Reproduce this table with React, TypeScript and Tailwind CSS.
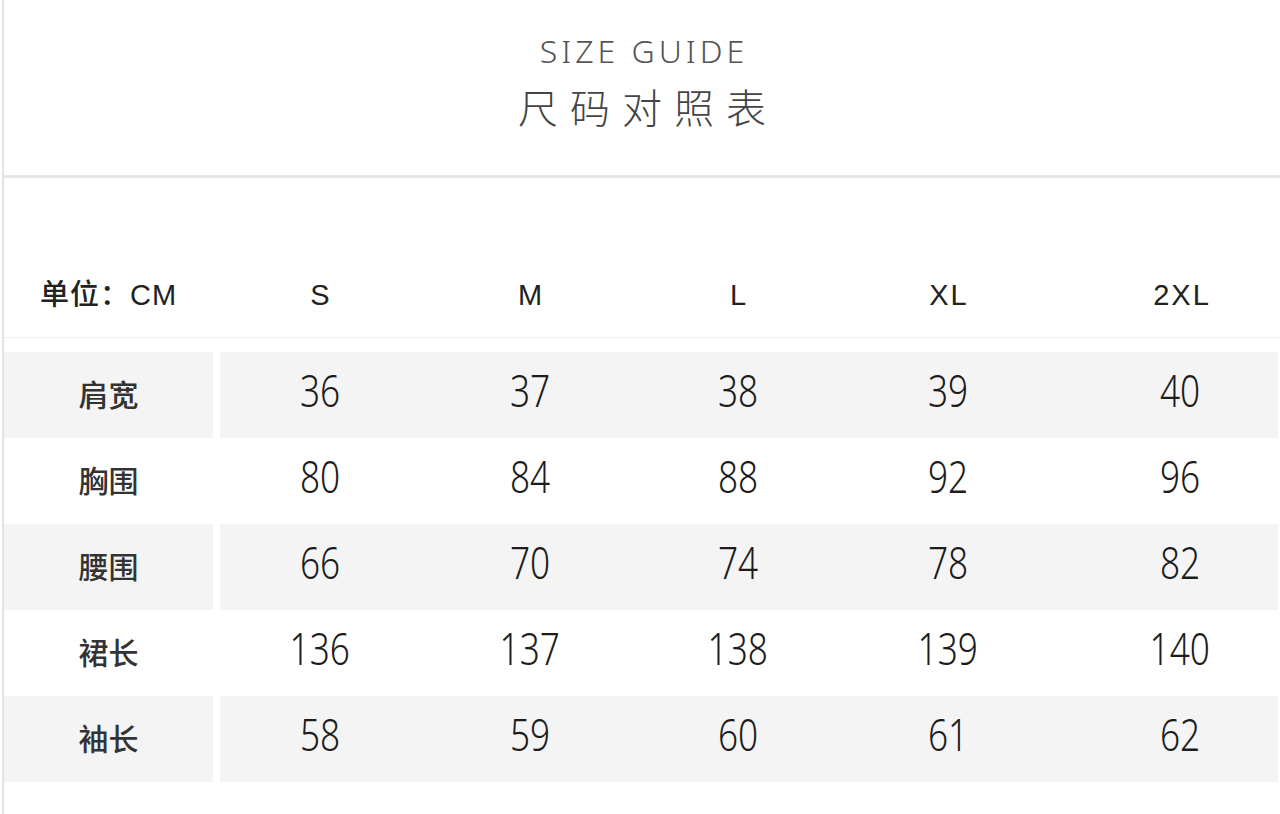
import React from "react";

const sizes = ["S", "M", "L", "XL", "2XL"];

const rows = [
  { label: "肩宽", values: ["36", "37", "38", "39", "40"] },
  { label: "胸围", values: ["80", "84", "88", "92", "96"] },
  { label: "腰围", values: ["66", "70", "74", "78", "82"] },
  { label: "裙长", values: ["136", "137", "138", "139", "140"] },
  { label: "袖长", values: ["58", "59", "60", "61", "62"] },
];

// column widths of the data area, starting at x=220
const colClass = [
  "w-[200px]",
  "w-[220px]",
  "w-[196px]",
  "w-[224px]",
  "flex-1 pl-[22px]",
];

const cjk = "font-['Noto_Sans_CJK_SC',sans-serif]";
const latin = "font-['Liberation_Sans','Noto_Sans_CJK_SC',sans-serif]";

function DataCells({ values, header }: { values: string[]; header?: boolean }) {
  return (
    <div className="flex flex-1 items-center h-full">
      {values.map((v, i) => (
        <div key={i} className={`${colClass[i]} flex justify-center items-center`}>
          {header ? (
            <span className={`${latin} text-[29px] tracking-[2px] text-[#222] pl-[2px]`}>{v}</span>
          ) : (
            <span className="inline-block font-['Noto_Sans',sans-serif] font-light text-[44px] leading-none text-[#1c1c1c] scale-x-[0.8] -translate-y-[5px]">
              {v}
            </span>
          )}
        </div>
      ))}
    </div>
  );
}

export default function App() {
  return (
    <div className="w-[1280px] min-h-[814px] bg-white overflow-hidden">
      <div className="ml-[2px] border-l-2 border-[#e4e4e4] min-h-[814px] flex flex-col">
        {/* title */}
        <div className="h-[175px] flex flex-col items-center pt-[35px]">
          <p className="font-['Noto_Sans',sans-serif] font-light text-[32px] leading-none tracking-[4px] text-[#555] pl-[4px]">
            SIZE GUIDE
          </p>
          <p className={`${cjk} font-light text-[40px] leading-none tracking-[12px] text-[#444] mt-[19px] pl-[12px]`}>
            尺码对照表
          </p>
        </div>
        <div className="h-[3px] bg-[#e6e6e6]" />

        {/* header row */}
        <div className="h-[76px]" />
        <div className="flex h-[84px] border-b border-[#efefef]">
          <div className="w-[209px] flex items-center justify-center">
            <span className={`${latin} text-[29px] font-medium tracking-[1px] text-[#222]`}>单位：CM</span>
          </div>
          <div className="w-[7px]" />
          <DataCells values={sizes} header />
        </div>
        <div className="h-[14px]" />

        {/* body rows */}
        {rows.map((row, r) => (
          <div key={row.label} className="flex h-[86px]">
            <div
              className={`w-[209px] flex items-center justify-center ${r % 2 === 0 ? "bg-[#f4f4f4]" : "bg-white"}`}
            >
              <span className={`${cjk} text-[30px] font-medium text-[#333] -translate-y-[2px]`}>{row.label}</span>
            </div>
            <div className="w-[7px]" />
            <div className={`flex flex-1 mr-[2px] ${r % 2 === 0 ? "bg-[#f4f4f4]" : "bg-white"}`}>
              <DataCells values={row.values} />
            </div>
          </div>
        ))}
      </div>
    </div>
  );
}
